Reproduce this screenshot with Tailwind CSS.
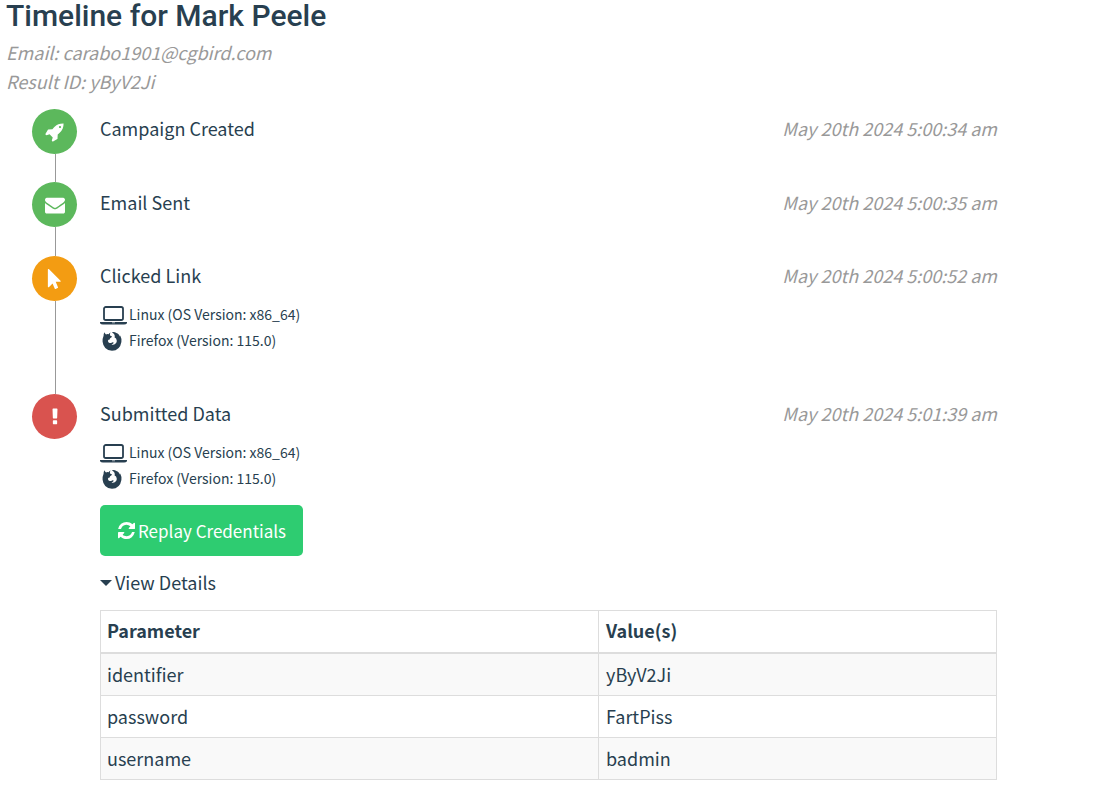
<!DOCTYPE html>
<html lang="en">
<head>
<meta charset="utf-8">
<meta name="viewport" content="width=device-width, initial-scale=1">
<title>Timeline for Mark Peele</title>
<script src="https://cdn.jsdelivr.net/npm/@tailwindcss/browser@4"></script>
</head>
<body class="bg-white font-['Noto_Sans_CJK_SC',sans-serif] text-[18px] leading-[29px] text-[#283f50]">
<svg class="hidden" aria-hidden="true">
  <symbol id="laptop" viewBox="0 0 27 20"><rect x="4" y="2" width="19" height="13" rx="1.800" fill="none" stroke="currentColor" stroke-width="1.800"/><path d="M0 17H27V18.200Q26 19.500 24 19.500H3Q1 19.500 0 18.200Z" fill="currentColor"/><path d="M12 17.800h3" stroke="#fff" stroke-width=".6"/></symbol>
  <symbol id="firefox" viewBox="0 0 20 20"><path fill="currentColor" d="M1.600 4.800Q1.400 2.800 2.500 1.200Q2.900 2.700 4 3.400Q5.400 2.900 6.600 3.300Q7.200 2 8.600 1.500Q7.600 2.900 8 4.200Q8.600 5 10 5.200Q9.900 6.400 8.400 7Q7.600 7.500 7.800 8.600Q6.300 8.600 5.900 9.800Q6 11.500 7.600 12Q9 12.200 10 11.400Q11.200 10.900 11.800 11.800Q11.200 13 9.500 13.400Q12.500 14.300 14.300 11.800Q15.300 9.800 14.200 7.800Q13.600 7 12.600 6.500Q13.200 5 12.200 3.300Q11.400 2 9.800 1.200Q12.400.600 14.400 1.900L15.600 2.600Q17.200 3.800 17.900 5.600L18.200 4.600Q19.800 7.500 19.400 11Q18 19.500 10 19.800Q1.400 19 .600 10.800Q.400 7.400 1.600 4.800Z"/></symbol>
</svg>
<main class="pl-1.5 pr-[97px]">
  <h1 class="font-['Roboto',sans-serif] text-[30px] leading-8 font-medium">Timeline for Mark Peele</h1>
  <p class="mt-1.5 italic text-[#999]">Email: carabo1901@cgbird.com<br>Result ID: yByV2Ji</p>
  <ol class="mt-[13px] ml-[26px]">
    <li class="flex gap-[23px]">
      <div class="flex w-[45px] flex-col">
        <span class="flex size-[45px] shrink-0 items-center justify-center rounded-full bg-[#5cb85c] text-white"><svg class="size-5" viewBox="0 0 1792 1792" fill="currentColor" aria-hidden="true"><path d="M1440 448q0-40-28-68t-68-28-68 28-28 68 28 68 68 28 68-28 28-68zm224-288q0 249-75.500 430.500t-253.500 360.500q-81 80-195 176l-20 379q-2 16-16 26l-384 224q-7 4-16 4-12 0-23-9l-64-64q-13-14-8-32l85-276-281-281-276 85q-3 1-9 1-14 0-23-9l-64-64q-17-19-5-39l224-384q10-14 26-16l379-20q96-114 176-195 188-187 358-258t431-71q14 0 24 9.500t10 22.500z"/></svg></span>
        <span class="ml-[23px] w-px grow bg-[#999]"></span>
      </div>
      <div class="flex grow justify-between pt-[5px] pb-[39px]"><span>Campaign Created</span><time class="italic text-[#999]">May 20th 2024 5:00:34 am</time></div>
    </li>
    <li class="flex gap-[23px]">
      <div class="flex w-[45px] flex-col">
        <span class="flex size-[45px] shrink-0 items-center justify-center rounded-full bg-[#5cb85c] text-white"><svg class="size-5" viewBox="0 0 1792 1792" fill="currentColor" aria-hidden="true"><path d="M1792 710v794q0 66-47 113t-113 47h-1472q-66 0-113-47t-47-113v-794q44 49 101 87 362 246 497 345 57 42 92.500 65.500t94.500 48 110 24.500h2q51 0 110-24.500t94.500-48 92.500-65.500q170-123 498-345 57-39 100-87zm0-294q0 79-49 151t-122 123q-376 261-468 325-10 7-42.500 31t-54 38.500-52 32.500-57.500 27-50 9h-2q-23 0-50-9t-57.500-27-52-32.500-54-38.500-42.500-31q-91-64-262-182.500t-205-142.500q-62-42-117-115.500t-55-136.500q0-78 41.500-130t118.500-52h1472q65 0 112.500 47t47.500 113z"/></svg></span>
        <span class="ml-[23px] w-px grow bg-[#999]"></span>
      </div>
      <div class="flex grow justify-between pt-1.5 pb-[39px]"><span>Email Sent</span><time class="italic text-[#999]">May 20th 2024 5:00:35 am</time></div>
    </li>
    <li class="flex gap-[23px]">
      <div class="flex w-[45px] flex-col">
        <span class="flex size-[45px] shrink-0 items-center justify-center rounded-full bg-[#f39c12] text-white"><svg class="size-5" viewBox="0 0 1792 1792" fill="currentColor" aria-hidden="true"><path d="M1389 1043q31 30 14 69-17 40-59 40h-382l201 476q10 25 0 49t-34 35l-177 75q-25 10-49 0t-35-34l-191-452-312 312q-19 19-45 19-12 0-24-5-40-17-40-59v-1504q0-42 40-59 12-5 24-5 27 0 45 19z"/></svg></span>
        <span class="ml-[23px] w-px grow bg-[#999]"></span>
      </div>
      <div class="grow pt-[5px] pb-[41px]">
        <div class="flex justify-between"><span>Clicked Link</span><time class="italic text-[#999]">May 20th 2024 5:00:52 am</time></div>
        <ul class="mt-[11px] text-sm leading-[26px]">
          <li class="flex gap-0.5"><svg class="mt-1 h-5 w-[27px]" aria-hidden="true"><use href="#laptop"/></svg>Linux (OS Version: x86_64)</li>
          <li class="flex gap-0.5"><span class="flex w-[27px] pt-1 pl-0.5"><svg class="size-5" aria-hidden="true"><use href="#firefox"/></svg></span>Firefox (Version: 115.0)</li>
        </ul>
      </div>
    </li>
    <li class="flex gap-[23px]">
      <div class="w-[45px]">
        <span class="flex size-[45px] items-center justify-center rounded-full bg-[#d9534f] text-white"><svg class="size-5" viewBox="0 0 1792 1792" fill="currentColor" aria-hidden="true"><path d="M1088 1248v224q0 26-19 45t-45 19h-256q-26 0-45-19t-19-45v-224q0-26 19-45t45-19h256q26 0 45 19t19 45zm30-1056l-28 768q-1 26-20.500 45t-45.500 19h-256q-26 0-45.500-19t-20.500-45l-28-768q-1-26 17.500-45t44.500-19h320q26 0 44.500 19t17.500 45z"/></svg></span>
      </div>
      <div class="grow pt-[5px]">
        <div class="flex justify-between"><span>Submitted Data</span><time class="italic text-[#999]">May 20th 2024 5:01:39 am</time></div>
        <ul class="mt-[11px] text-sm leading-[26px]">
          <li class="flex gap-0.5"><svg class="mt-1 h-5 w-[27px]" aria-hidden="true"><use href="#laptop"/></svg>Linux (OS Version: x86_64)</li>
          <li class="flex gap-0.5"><span class="flex w-[27px] pt-1 pl-0.5"><svg class="size-5" aria-hidden="true"><use href="#firefox"/></svg></span>Firefox (Version: 115.0)</li>
        </ul>
        <button type="button" class="mt-[14px] flex h-[51px] items-center gap-[3px] rounded-[5px] bg-[#2ecc71] pr-[17px] pl-[18px] text-[17px] text-white"><svg class="size-[17px]" viewBox="128 128 1536 1536" fill="currentColor" aria-hidden="true"><path d="M1639 1056q0 5-1 7-64 268-268 434.500t-478 166.500q-146 0-282.500-55t-243.500-157l-129 129q-19 19-45 19t-45-19-19-45v-448q0-26 19-45t45-19h448q26 0 45 19t19 45-19 45l-137 137q71 66 161 102t187 36q134 0 250-65t186-179q11-17 53-117 8-23 30-23h192q13 0 22.500 9.500t9.500 22.500zm25-800v448q0 26-19 45t-45 19h-448q-26 0-45-19t-19-45 19-45l138-138q-148-137-349-137-134 0-250 65t-186 179q-11 17-53 117-8 23-30 23h-199q-13 0-22.500-9.500t-9.500-22.500v-7q65-268 270-434.500t480-166.500q146 0 284 55.500t245 156.500l130-129q19-19 45-19t45 19 19 45z"/></svg>Replay Credentials</button>
        <details open class="mt-3">
          <summary class="flex cursor-pointer list-none items-center gap-[3px]"><svg class="h-1.5 w-3" viewBox="0 0 12 6" aria-hidden="true"><path d="M0 0h12L6 6z" fill="currentColor"/></svg>View Details</summary>
          <table class="mt-[13px] w-full table-fixed border-collapse border border-[#ddd] text-left">
            <colgroup><col class="w-[498px]"><col></colgroup>
            <thead><tr class="border-b-2 border-[#ddd]"><th class="border-r border-[#ddd] px-1.5 pt-[5px] pb-[7px] font-bold">Parameter</th><th class="pt-[5px] pr-1.5 pb-[7px] pl-[7px] font-bold">Value(s)</th></tr></thead>
            <tbody>
              <tr class="bg-[#f9f9f9]"><td class="border border-[#ddd] p-1.5">identifier</td><td class="border border-[#ddd] py-1.5 pr-1.5 pl-[7px]">yByV2Ji</td></tr>
              <tr><td class="border border-[#ddd] p-1.5">password</td><td class="border border-[#ddd] py-1.5 pr-1.5 pl-[7px]">FartPiss</td></tr>
              <tr class="bg-[#f9f9f9]"><td class="border border-[#ddd] p-1.5">username</td><td class="border border-[#ddd] py-1.5 pr-1.5 pl-[7px]">badmin</td></tr>
            </tbody>
          </table>
        </details>
      </div>
    </li>
  </ol>
</main>
</body>
</html>
